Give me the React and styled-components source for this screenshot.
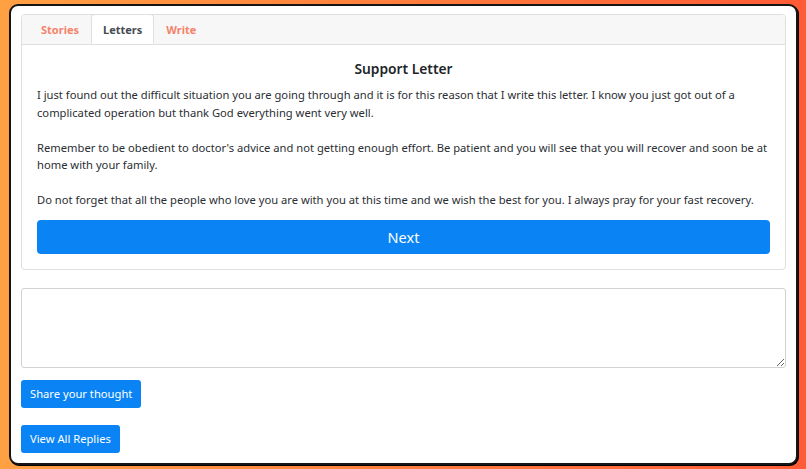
import React, {useState} from 'react'
import styled, {createGlobalStyle} from 'styled-components'

const Global = createGlobalStyle`
    html, body {
        margin:0;
        padding:0;
    }
    body {
        width:806px;
        height:469px;
        overflow:hidden;
        background: linear-gradient(90deg, #ffa043 0%, #ff7a3c 55%, #ff5b36 100%);
        font-family: "Noto Sans", "Open Sans", sans-serif;
        color:#212529;
    }
`

const Panel = styled.div`
    margin: 4px 0 0 9px;
    width:789px;
    height:461px;
    box-sizing:border-box;
    background:#fff;
    border:2px solid #151515;
    border-radius:9px;
    box-shadow: 1px 1px 0 #000;
    padding:8px 10px;
    display:flex;
    flex-direction:column;
`

const Card = styled.div`
    border:1px solid #dfdfdf;
    border-radius:4px;
    display:flex;
    flex-direction:column;
`

const Header = styled.div`
    height:30px;
    background:#f7f7f7;
    border-bottom:1px solid #dfdfdf;
    border-radius:4px 4px 0 0;
    box-sizing:border-box;
    display:flex;
    padding-left:7px;
`

const Tab = styled.button`
    background:${p => p.active ? '#fff' : 'transparent'};
    border:1px solid ${p => p.active ? '#dfdfdf' : 'transparent'};
    border-bottom-color:${p => p.active ? '#fff' : 'transparent'};
    border-radius:4px 4px 0 0;
    height:30px;
    margin-top:-1px;
    padding:0 11px;
    font-family:inherit;
    font-size:11px;
    font-weight:700;
    color:${p => p.active ? '#454b52' : '#f5826a'};
    cursor:pointer;
`

const Body = styled.div`
    padding:15px 15px 15px;
    display:flex;
    flex-direction:column;
`

const Title = styled.h5`
    margin:0 0 8px;
    text-align:center;
    font-size:13.8px;
    font-weight:600;
    line-height:18px;
`

const Letter = styled.p`
    margin:0 0 17.5px;
    font-size:11.2px;
    line-height:17.5px;
    color:#2a2e33;
    &:last-of-type{
        margin-bottom:11px;
    }
`

const NextButton = styled.button`
    height:34px;
    border:none;
    border-radius:4px;
    background:#0a84f5;
    color:#fff;
    font-family:inherit;
    font-size:14.5px;
    cursor:pointer;
`

const Reply = styled.textarea`
    margin-top:18px;
    height:80px;
    box-sizing:border-box;
    border:1px solid #d2d2d2;
    border-radius:3px;
    resize:vertical;
    font-family:inherit;
    font-size:12px;
    padding:6px 8px;
`

const SmallButton = styled.button`
    align-self:flex-start;
    margin-top:${p => p.gap}px;
    height:28px;
    padding:0 9px;
    border:none;
    border-radius:3px;
    background:#0a84f5;
    color:#fff;
    font-family:inherit;
    font-size:11.2px;
    cursor:pointer;
`

const tabs = ['Stories', 'Letters', 'Write']

export default function App() {
    let [tab, setTab] = useState('Letters')

    return (
        <>
            <Global/>
            <Panel>
                <Card>
                    <Header>
                        {tabs.map(t => <Tab key={t} active={t === tab} onClick={() => setTab(t)}>{t}</Tab>)}
                    </Header>
                    <Body>
                        <Title>Support Letter</Title>
                        <Letter>I just found out the difficult situation you are going through and it is for this reason that I write this letter. I know you just got out of a complicated operation but thank God everything went very well.</Letter>
                        <Letter>Remember to be obedient to doctor's advice and not getting enough effort. Be patient and you will see that you will recover and soon be at home with your family.</Letter>
                        <Letter>Do not forget that all the people who love you are with you at this time and we wish the best for you. I always pray for your fast recovery.</Letter>
                        <NextButton>Next</NextButton>
                    </Body>
                </Card>
                <Reply/>
                <SmallButton gap={12}>Share your thought</SmallButton>
                <SmallButton gap={17}>View All Replies</SmallButton>
            </Panel>
        </>
    )
}
